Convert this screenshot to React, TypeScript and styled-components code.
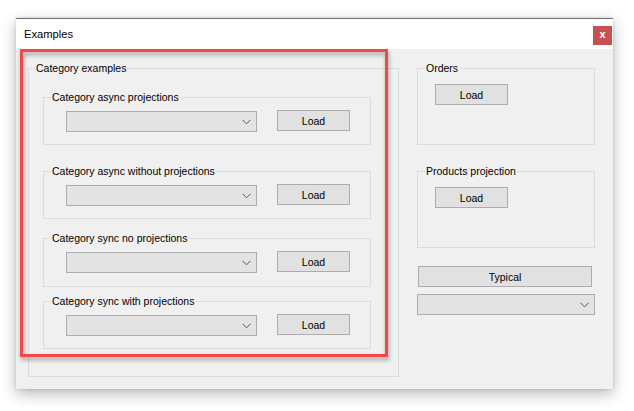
import React from "react";
import styled, { createGlobalStyle } from "styled-components";

const Global = createGlobalStyle`
  html, body { margin: 0; padding: 0; background: #ffffff; }
  body {
    width: 634px; height: 411px; overflow: hidden;
    font-family: "Liberation Sans", Arial, sans-serif;
    color: #000;
  }
`;

const Stage = styled.div`
  width: 634px;
  height: 411px;
  padding: 18px 0 0 16px;
  box-sizing: border-box;
`;

const Window = styled.div`
  position: relative;
  width: 597px;
  height: 371px;
  display: flex;
  flex-direction: column;
  background: #f0f0f0;
  border-top: 1px solid #707070;
  box-sizing: border-box;
  box-shadow: 0 5px 14px rgba(0, 0, 0, 0.28), 0 0 3px rgba(0, 0, 0, 0.14);
`;

const TitleBar = styled.div`
  height: 30px;
  flex: none;
  display: flex;
  justify-content: space-between;
  align-items: flex-start;
  background: #ffffff;
  padding-left: 8px;
`;

const Title = styled.span`
  font-size: 11.2px;
  line-height: 30px;
  color: #000;
`;

const CloseButton = styled.div`
  width: 19px;
  height: 19px;
  margin: 7px 1px 0 0;
  background: #c75050;
  color: #fff;
  display: flex;
  align-items: center;
  justify-content: center;
  font-size: 11px;
  font-weight: bold;
  line-height: 1;
  padding-bottom: 2px;
  box-sizing: border-box;
`;

const Content = styled.div`
  display: flex;
  gap: 18px;
  padding: 13px 0 0 12px;
`;

const Group = styled.fieldset<{ $w: number; $h: number; $mt?: number }>`
  margin: ${(p) => p.$mt ?? 0}px 0 0 0;
  padding: 0;
  min-width: 0;
  width: ${(p) => p.$w}px;
  height: ${(p) => p.$h}px;
  box-sizing: border-box;
  border: 1px solid #dcdcdc;
`;

const Legend = styled.legend<{ $ml: number }>`
  margin-left: ${(p) => p.$ml}px;
  padding: 0 1px;
  font-size: 10.5px;
  line-height: 13px;
  color: #000;
`;

const Stack = styled.div`
  display: flex;
  flex-direction: column;
  padding: 0 0 0 14px;
`;

const Row = styled.div<{ $pt: number; $pl: number }>`
  display: flex;
  align-items: flex-start;
  gap: 20px;
  padding: ${(p) => p.$pt}px 0 0 ${(p) => p.$pl}px;
`;

const Button = styled.div<{ $w: number; $mt?: number; $ml?: number }>`
  width: ${(p) => p.$w}px;
  height: 21px;
  margin: ${(p) => p.$mt ?? 0}px 0 0 ${(p) => p.$ml ?? 0}px;
  box-sizing: border-box;
  background: #e1e1e1;
  border: 1px solid #adadad;
  display: flex;
  align-items: center;
  justify-content: center;
  font-size: 10.5px;
  color: #000;
`;

const Combo = styled.div<{ $w: number; $mt?: number }>`
  width: ${(p) => p.$w}px;
  height: 21px;
  margin-top: ${(p) => p.$mt ?? 0}px;
  box-sizing: border-box;
  background: #e3e3e3;
  border: 1px solid #adadad;
  display: flex;
  align-items: center;
  justify-content: flex-end;
  padding-right: 5px;
`;

const RightColumn = styled.div`
  display: flex;
  flex-direction: column;
  width: 179px;
`;

const Highlight = styled.div`
  position: absolute;
  left: 4px;
  top: 30px;
  width: 368px;
  height: 308px;
  box-sizing: border-box;
  border: 3px solid #f44848;
  filter: drop-shadow(1px 3px 2px rgba(0, 0, 0, 0.35));
  pointer-events: none;
`;

const Chevron = () => (
  <svg width="9" height="6" viewBox="0 0 9 6">
    <polyline points="0.5,0.8 4.5,4.8 8.5,0.8" fill="none" stroke="#555" strokeWidth="1" />
  </svg>
);

const categories = [
  { label: "Category async projections", mt: 16, h: 54 },
  { label: "Category async without projections", mt: 20, h: 54 },
  { label: "Category sync no projections", mt: 13, h: 55 },
  { label: "Category sync with projections", mt: 8, h: 54 },
];

export default function App() {
  return (
    <>
      <Global />
      <Stage>
        <Window>
          <TitleBar>
            <Title>Examples</Title>
            <CloseButton>x</CloseButton>
          </TitleBar>
          <Content>
            <Group $w={371} $h={315}>
              <Legend $ml={6}>Category examples</Legend>
              <Stack>
                {categories.map((c) => (
                  <Group key={c.label} $w={328} $h={c.h} $mt={c.mt}>
                    <Legend $ml={7}>{c.label}</Legend>
                    <Row $pt={6} $pl={22}>
                      <Combo $w={191} $mt={1}>
                        <Chevron />
                      </Combo>
                      <Button $w={73}>Load</Button>
                    </Row>
                  </Group>
                ))}
              </Stack>
            </Group>
            <RightColumn>
              <Group $w={178} $h={83}>
                <Legend $ml={7}>Orders</Legend>
                <Row $pt={9} $pl={17}>
                  <Button $w={73}>Load</Button>
                </Row>
              </Group>
              <Group $w={178} $h={83} $mt={20}>
                <Legend $ml={7}>Products projection</Legend>
                <Row $pt={9} $pl={17}>
                  <Button $w={73}>Load</Button>
                </Row>
              </Group>
              <Button $w={174} $mt={18} $ml={1}>Typical</Button>
              <Combo $w={178} $mt={7}>
                <Chevron />
              </Combo>
            </RightColumn>
          </Content>
          <Highlight />
        </Window>
      </Stage>
    </>
  );
}
